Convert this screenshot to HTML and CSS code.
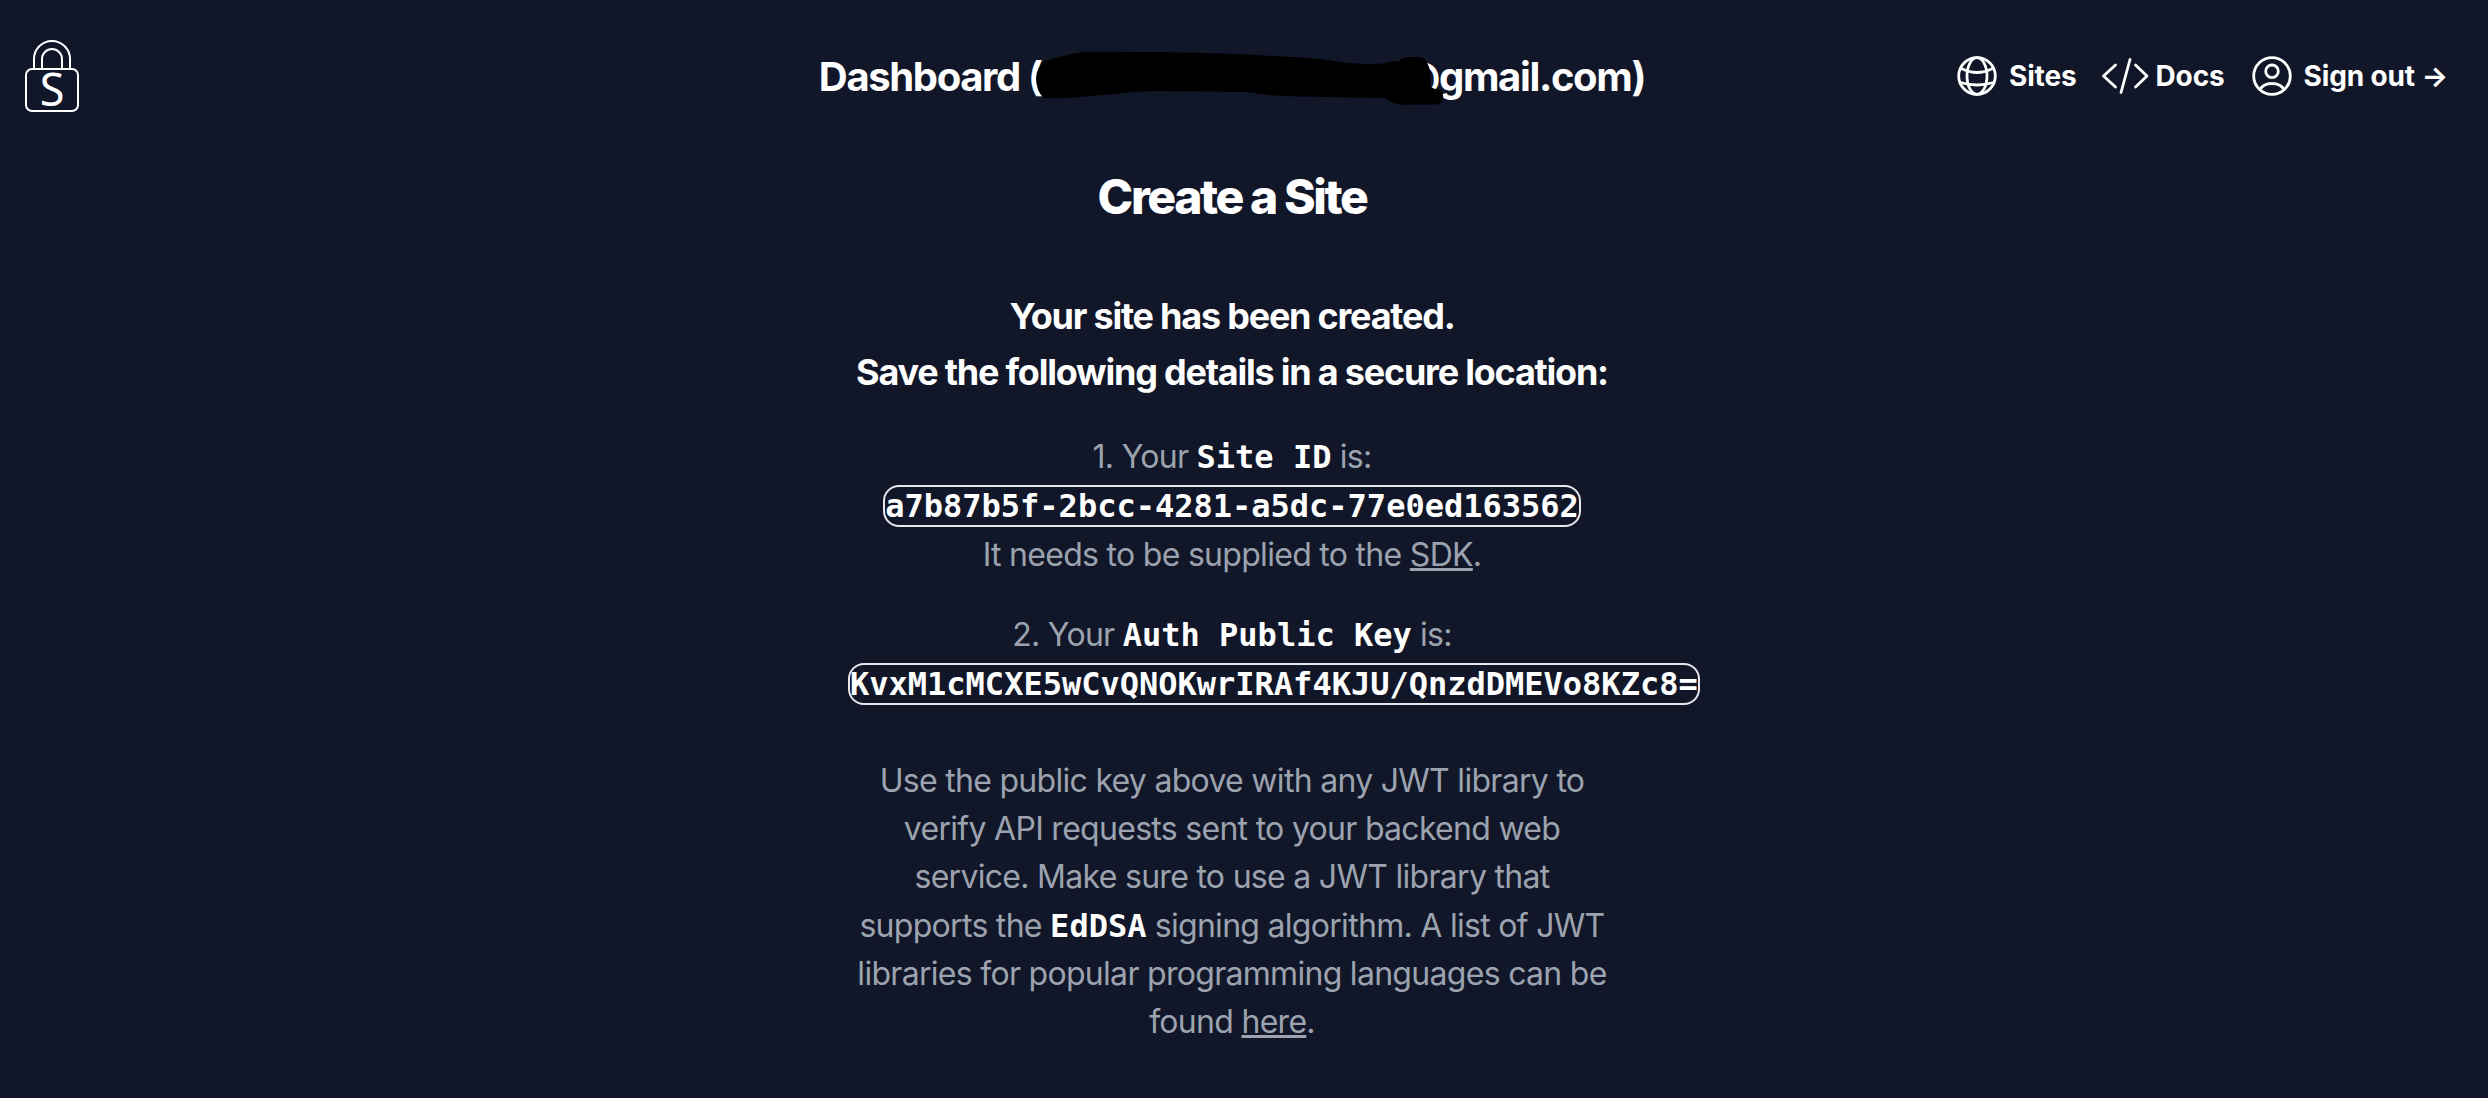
FILE: index.html
```html
<!DOCTYPE html>
<html lang="en">
	<head>
		<meta charset="utf-8">
		<title>Dashboard</title>
		<link rel="stylesheet" href="styles.css">
	</head>
	<body>
		<div class="page">
			<header class="header">
				<a class="logo">
					<svg width="54" height="74" viewBox="0 0 54 74" fill="none" stroke="#fff" stroke-width="2">
						<path d="M9 29V19a18 18 0 0 1 36 0v10"/>
						<path d="M17 29V19a10 10 0 0 1 20 0v10"/>
						<rect x="1" y="29" width="52" height="42" rx="6"/>
						<text class="logo-text" x="27" y="65.5" text-anchor="middle">S</text>
					</svg>
				</a>
				<h1 class="title">Dashboard (<span class="redacted">
					<svg width="410" height="60" viewBox="1036 50 410 60">
						<path d="M1045 62C1060 59 1072 53 1092 52.7L1165 53L1240 55L1310 59C1332 61 1350 65 1367 65C1376 65 1384 65 1388 63.500Q1395 61 1400 62.500Q1402 58 1410 58H1420C1427 58 1430 66 1431.500 74V87Q1434 90 1440 91Q1445 94 1444 99Q1443 105 1437 105.500L1403 105.800Q1394 105 1385 99C1345 98 1310 98 1273 96.500C1260 95 1252 93 1240 93L1160 92C1135 92 1110 96 1083 97.700Q1060 100 1045 99Q1037 92 1037 79Q1038 68 1045 62Z"/>
					</svg>
				</span>@gmail.com)</h1>
				<nav class="nav">
					<a class="nav-sites">
						<svg width="40" height="40" viewBox="0 0 40 40" fill="none" stroke="#fff" stroke-width="2.8">
							<circle cx="20" cy="20" r="18.300"/>
							<ellipse cx="20" cy="20" rx="10" ry="18.300"/>
							<path d="M4.500 12.500Q20 20.500 35.500 12.500M3.500 26.500Q20 31.500 36.500 26.500"/>
						</svg>
						Sites
					</a>
					<a class="nav-docs">
						<svg width="48" height="40" viewBox="0 0 48 40" fill="none" stroke="#fff" stroke-width="2.8" stroke-linecap="round" stroke-linejoin="round">
							<path d="M14.500 9L2.500 20L14.500 31M34.500 9L46 20L34.500 31M29 3.500L20 36.500"/>
						</svg>
						Docs
					</a>
					<a class="nav-user">
						<svg width="40" height="40" viewBox="0 0 40 40" fill="none" stroke="#fff" stroke-width="2.8">
							<circle cx="20" cy="20" r="18.300"/>
							<circle cx="20" cy="15.300" r="6.300"/>
							<path d="M8 33.500Q11.500 27.500 20 27.500Q28.500 27.500 32 33.500"/>
						</svg>
						Sign out →
					</a>
				</nav>
			</header>

			<main class="main">
				<h2>Create a Site</h2>
				<h3>Your site has been created.<br>Save the following details in a secure location:</h3>
				<p>
					1. Your <code>Site ID</code> is:<br>
					<code class="value">a7b87b5f-2bcc-4281-a5dc-77e0ed163562</code><br>
					It needs to be supplied to the <a class="link">SDK</a>.
				</p>
				<p>
					2. Your <code>Auth Public Key</code> is:<br>
					<code class="value">KvxM1cMCXE5wCvQNOKwrIRAf4KJU/QnzdDMEVo8KZc8=</code>
				</p>
				<p class="note">
					Use the public key above with any JWT library to verify API requests sent to your backend web service. Make sure to use a JWT library that supports the <code>EdDSA</code> signing algorithm. A list of JWT libraries for popular programming languages can be found <a class="link">here</a>.
				</p>
			</main>
		</div>
	</body>
</html>
```

FILE: styles.css
```css
* {
	box-sizing: border-box;
	margin: 0;
	padding: 0;
}

body {
	background-color: #111729;
	color: #fff;
	font-family: Inter, sans-serif;
	overflow: hidden;
}

.page {
	width: 2464px;
}

.header {
	display: grid;
	grid-template-columns: 1fr auto 1fr;
	align-items: center;
	height: 152px;
	padding: 2px 16px 0 16px;
}

.logo {
	padding-left: 9px;
}

.logo svg {
	display: block;
}

.logo-text {
	font-family: "Noto Sans", sans-serif;
	font-size: 45px;
	fill: #fff;
	stroke: none;
}

.title {
	font-size: 40px;
	font-weight: 650;
	line-height: 56px;
	letter-spacing: -0.034em;
	white-space: nowrap;
}

.redacted {
	display: inline-block;
	position: relative;
	width: 358px;
	height: 20px;
}

/* scribble over the address */
.redacted svg {
	position: absolute;
	left: -7px;
	top: -22px;
}

.nav {
	display: flex;
	justify-content: flex-end;
	margin-bottom: 2px;
	font-size: 28px;
	font-weight: 650;
	line-height: 40px;
	letter-spacing: -0.005em;
}

.nav a {
	display: flex;
	align-items: center;
	white-space: nowrap;
}

.nav-sites svg,
.nav-user svg {
	margin-right: 12px;
}

.nav-docs svg {
	margin-right: 7px;
}

.nav-sites {
	margin-right: 24px;
}

.nav-docs {
	margin-right: 27px;
}

.main {
	width: 768px;
	margin: 0 auto;
	text-align: center;
}

h2 {
	padding-top: 15px;
	font-size: 48px;
	font-weight: 800;
	line-height: 60px;
	letter-spacing: -0.05em;
}

h3 {
	margin-top: 61px;
	margin-bottom: 32px;
	font-size: 36px;
	font-weight: 650;
	line-height: 56px;
	letter-spacing: -0.034em;
}

p {
	margin-top: 31px;
	color: #9ca3af;
	font-size: 32px;
	line-height: 49px;
	letter-spacing: -0.022em;
}

code {
	color: #fff;
	font-family: "DejaVu Sans Mono", monospace;
	font-size: 32px;
	font-weight: 700;
	line-height: 1;
	letter-spacing: 0;
}

.value {
	border: 2px solid #e5e7eb;
	border-radius: 16px;
}

.note {
	margin-top: 49px;
	line-height: 48.2px;
}

.link {
	text-decoration: underline;
}
```
